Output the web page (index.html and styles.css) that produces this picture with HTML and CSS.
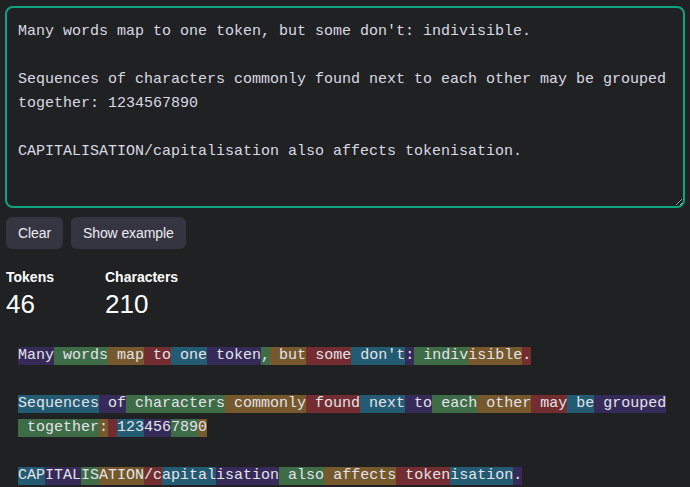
FILE: index.html
```html
<!DOCTYPE html>
<html lang="en">
<head>
<meta charset="utf-8">
<title>Tokenizer</title>
<link rel="stylesheet" href="styles.css">
</head>
<body>
<div class="app">
<textarea class="input" spellcheck="false">Many words map to one token, but some don't: indivisible.

Sequences of characters commonly found next to each other may be grouped together: 1234567890

CAPITALISATION/capitalisation also affects tokenisation.</textarea>
<div class="actions">
<button class="btn">Clear</button>
<button class="btn">Show example</button>
</div>
<div class="stats">
<div class="stat"><div class="stat-label">Tokens</div><div class="stat-value">46</div></div>
<div class="stat"><div class="stat-label">Characters</div><div class="stat-value">210</div></div>
</div>
<div class="tokens"><span class="t c0">Many</span><span class="t c1"> words</span><span class="t c2"> map</span><span class="t c3"> to</span><span class="t c4"> one</span><span class="t c0"> token</span><span class="t c1">,</span><span class="t c2"> but</span><span class="t c3"> some</span><span class="t c4"> don't</span><span class="t c0">:</span><span class="t c1"> indiv</span><span class="t c2">isible</span><span class="t c3">.</span>

<span class="t c4">Sequences</span><span class="t c0"> of</span><span class="t c1"> characters</span><span class="t c2"> commonly</span><span class="t c3"> found</span><span class="t c4"> next</span><span class="t c0"> to</span><span class="t c1"> each</span><span class="t c2"> other</span><span class="t c3"> may</span><span class="t c4"> be</span><span class="t c0"> grouped</span><span class="t c1"> together</span><span class="t c2">:</span><span class="t c3"> </span><span class="t c4">123</span><span class="t c0">456</span><span class="t c1">789</span><span class="t c2">0</span>

<span class="t c4">CAP</span><span class="t c0">ITAL</span><span class="t c1">IS</span><span class="t c2">ATION</span><span class="t c3">/c</span><span class="t c4">apital</span><span class="t c0">isation</span><span class="t c1"> also</span><span class="t c2"> affects</span><span class="t c3"> token</span><span class="t c4">isation</span><span class="t c0">.</span></div>
</div>
</body>
</html>
```

FILE: styles.css
```css
html, body {
  margin: 0;
  padding: 0;
  background: #202123;
}

.app {
  padding: 6px 5px 0 5px;
  font-family: "Liberation Sans", Arial, sans-serif;
  color: #ececf1;
}

.input {
  display: block;
  box-sizing: border-box;
  width: 100%;
  height: 202px;
  margin: 0;
  padding: 12px 11px;
  border: 2px solid #10a37f;
  border-radius: 8px;
  background: #202123;
  color: #d9d9e3;
  font-family: "Liberation Mono", "Courier New", monospace;
  font-size: 15px;
  line-height: 24px;
  outline: none;
  resize: vertical;
  color-scheme: dark;
  overflow: hidden;
}

.actions {
  display: flex;
  gap: 8px;
  margin-top: 9px;
  padding-left: 1px;
}

.btn {
  height: 32px;
  padding: 0 12px;
  border: none;
  border-radius: 6px;
  background: #343541;
  color: #ececf1;
  font-family: "Liberation Sans", Arial, sans-serif;
  font-size: 14px;
  letter-spacing: -0.1px;
}

.stats {
  display: flex;
  gap: 51px;
  margin-top: 18px;
  padding-left: 1px;
}

.stat-label {
  font-size: 14px;
  line-height: 20px;
  font-weight: 700;
  color: #ffffff;
}

.stat-value {
  margin-top: 1px;
  font-size: 26px;
  line-height: 32px;
  color: #ffffff;
}

.tokens {
  margin-top: 24px;
  padding: 0 5px 0 13px;
  white-space: pre-wrap;
  font-family: "Liberation Mono", "Courier New", monospace;
  font-size: 15px;
  line-height: 24px;
  color: #e3e3ea;
}

.t {
  display: inline-block;
  white-space: pre;
  line-height: 18px;
}

.c0 { background: rgba(107, 64, 216, 0.3); }
.c1 { background: rgba(104, 222, 122, 0.4); }
.c2 { background: rgba(244, 172, 54, 0.4); }
.c3 { background: rgba(239, 65, 70, 0.4); }
.c4 { background: rgba(39, 181, 234, 0.4); }
```
